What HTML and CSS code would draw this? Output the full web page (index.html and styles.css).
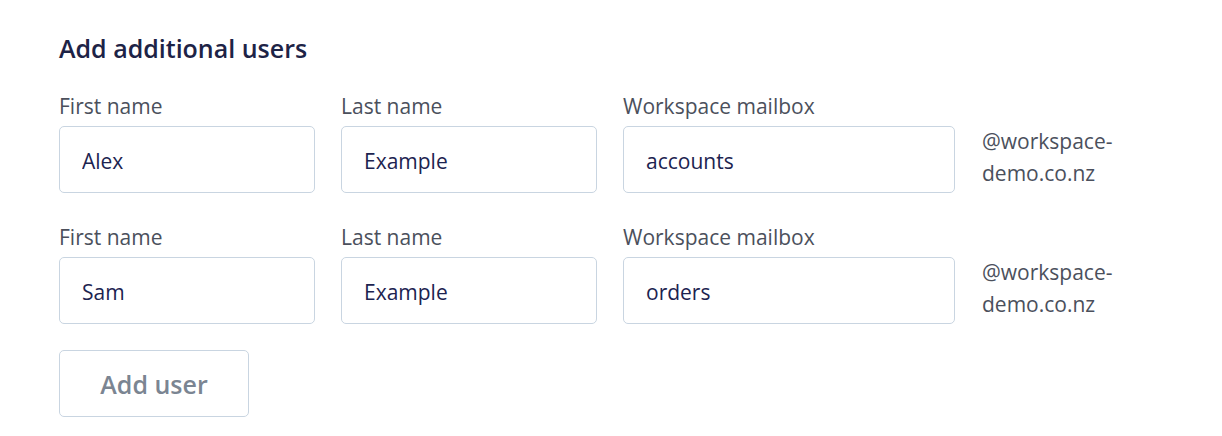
FILE: index.html
```html
<!DOCTYPE html>
<html lang="en">
<head>
    <meta charset="UTF-8">
    <title>Add additional users</title>
    <link rel="stylesheet" href="styles.css">
</head>
<body>
    <section class="users-form">
        <h2>Add additional users</h2>

        <!-- Fila de usuario -->
        <div class="user-row">
            <label class="field">
                <span class="field-label">First name</span>
                <input type="text" value="Alex">
            </label>
            <label class="field">
                <span class="field-label">Last name</span>
                <input type="text" value="Example">
            </label>
            <label class="field field-wide">
                <span class="field-label">Workspace mailbox</span>
                <input type="text" value="accounts">
            </label>
            <div class="domain">@workspace-<br>demo.co.nz</div>
        </div>

        <div class="user-row">
            <label class="field">
                <span class="field-label">First name</span>
                <input type="text" value="Sam">
            </label>
            <label class="field">
                <span class="field-label">Last name</span>
                <input type="text" value="Example">
            </label>
            <label class="field field-wide">
                <span class="field-label">Workspace mailbox</span>
                <input type="text" value="orders">
            </label>
            <div class="domain">@workspace-<br>demo.co.nz</div>
        </div>

        <button class="add-btn" type="button">Add user</button>
    </section>
</body>
</html>
```

FILE: styles.css
```css
/* Estilo general */
body {
    font-family: "Open Sans", Arial, sans-serif;
    background-color: #fff;
    margin: 0;
    padding: 0;
}
.users-form {
    padding: 32px 59px 0;
}
.users-form h2 {
    font-size: 25px;
    font-weight: 600;
    color: #1d2346;
    margin: 0 0 28px;
    line-height: 32px;
}
.user-row {
    display: flex;
    align-items: flex-end;
    gap: 26px;
    margin-bottom: 30px;
}
.field {
    display: flex;
    flex-direction: column;
    width: 256px;
}
.field-wide { width: 332px; }
.field-label {
    font-size: 21px;
    color: #4b505c;
    line-height: 28px;
    margin-bottom: 6px;
}
.field input {
    box-sizing: border-box;
    height: 67px;
    width: 100%;
    border: 1px solid #c9d5e1;
    border-radius: 5px;
    padding: 3px 22px 0;
    font-family: inherit;
    font-size: 21px;
    color: #1c2350;
    outline: none;
}
.domain {
    font-size: 21px;
    color: #4b505c;
    line-height: 32px;
    margin-bottom: 4px;
    margin-left: 1px;
}
.add-btn {
    box-sizing: border-box;
    width: 190px;
    height: 67px;
    background-color: #fff;
    border: 1px solid #c9d5e1;
    border-radius: 5px;
    font-family: inherit;
    font-size: 25px;
    font-weight: 600;
    color: #7b8592;
    cursor: pointer;
    margin-top: -4px;
}
```
